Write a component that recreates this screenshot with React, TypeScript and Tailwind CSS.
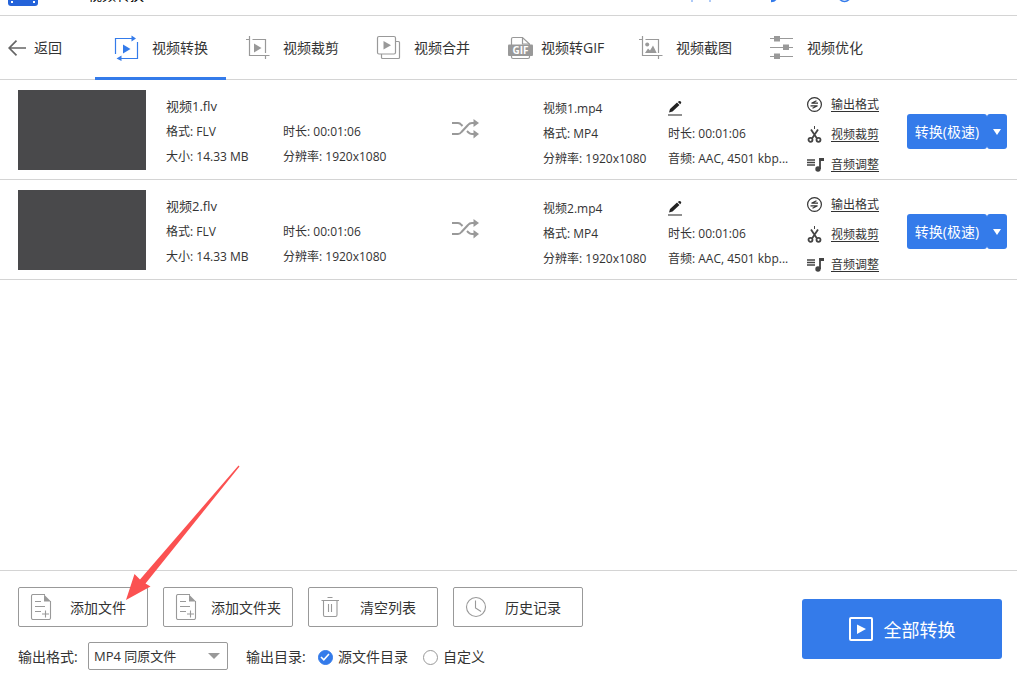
import type { ReactNode } from "react";

const icons: Record<string, ReactNode> = {
  convert: (
    <svg width="26" height="26" viewBox="0 0 26 26" fill="none" stroke="#347bea" strokeWidth="1.2">
      <path d="M1.500 19V3.500H18M23.500 7v16.500H7" />
      <path d="M17.500 .5 22 3.500 17.500 6.500ZM7.500 20.500 2.500 23.500 7.500 26Z" fill="#347bea" stroke="none" />
      <path d="M9 9.500 16.500 14 9 18.500Z" fill="#347bea" stroke="none" />
    </svg>
  ),
  crop: (
    <svg width="26" height="26" viewBox="0 0 26 26" fill="none" stroke="#999" strokeWidth="1.2">
      <path d="M1 4.500h3.500M4.500 1v19.500h20M7.500 4.500h13V18M20.500 20.500V24" />
      <path d="M9 8.500 16.500 13 9 17.500Z" fill="#999" stroke="none" />
    </svg>
  ),
  merge: (
    <svg width="26" height="26" viewBox="0 0 26 26" fill="none" stroke="#999" strokeWidth="1.2">
      <rect x="1.500" y="1.500" width="18" height="17.500" rx="1.500" />
      <path d="M19.500 6.500h3q1 0 1 1v15q0 1-1 1h-16q-1 0-1-1V19" />
      <path d="M7.500 6 15 10.300 7.500 14.600Z" fill="#999" stroke="none" />
    </svg>
  ),
  gif: (
    <svg width="26" height="26" viewBox="0 0 26 26" fill="none" stroke="#999" strokeWidth="1.2">
      <path d="M4.500 10V4q0-1.500 1.500-1.500h9.500L22.500 9v1M15.500 2.500V9h7M4.500 20v2q0 1.500 1.500 1.500h15q1.500 0 1.500-1.500v-2" />
      <rect x="1" y="9.500" width="25" height="11.500" rx="1" fill="#999" stroke="none" />
      <text x="13.500" y="19" textAnchor="middle" fill="#fff" stroke="none" className="font-['Open_Sans'] text-[10px] font-bold">GIF</text>
    </svg>
  ),
  shot: (
    <svg width="26" height="26" viewBox="0 0 26 26" fill="none" stroke="#999" strokeWidth="1.2">
      <path d="M1 4.500h3.500M4.500 1v19.500h20M7.500 4.500h13V18M20.500 20.500V24" />
      <circle cx="9.200" cy="9.500" r="2" fill="#999" stroke="none" />
      <path d="M7 18 10 13.500 12 15.500 15 10.500 18.700 18Z" fill="#999" stroke="none" />
    </svg>
  ),
  tune: (
    <svg width="26" height="26" viewBox="0 0 26 26" stroke="#999" strokeWidth="1.100">
      <path d="M1 3.500h23M1 12.500h23M1 21.500h23" />
      <path d="M5 1h6v5.500H5zM14 9.500h6V15h-6zM5 18.500h6V24H5z" fill="#999" stroke="none" />
    </svg>
  ),
  file: (
    <svg width="24" height="26" viewBox="0 0 24 26" fill="none" stroke="#999" strokeWidth="1.1">
      <path d="M15 .5H3Q1.500 .5 1.500 2v22q0 1.500 1.500 1.500h16q1.500 0 1.500-1.500V7" />
      <path d="M14 .5 21 7.500h-7Z" fill="#999" stroke="none" />
      <path d="M5 7.500h6M5 12.500h10M5 17.500h6M15.500 16.500v7M12 20h7" />
    </svg>
  ),
  trash: (
    <svg width="24" height="26" viewBox="0 0 24 26" fill="none" stroke="#999" strokeWidth="1.1">
      <path d="M7.500 3.500h5M1.500 6.500h17.500M3.500 6.500V21q0 1.500 1.500 1.500h10.500q1.500 0 1.500-1.500V6.500M8.500 10v8M11.500 10v8" />
    </svg>
  ),
  clock: (
    <svg width="24" height="26" viewBox="0 0 24 26" fill="none" stroke="#999" strokeWidth="1.1">
      <circle cx="11" cy="13" r="9.500" />
      <path d="M10.500 6.500V14l5.500 3.500" />
    </svg>
  ),
  format: (
    <svg width="16" height="16" viewBox="0 0 16 16" fill="none" stroke="#333" strokeWidth="1.200">
      <circle cx="7.500" cy="7.500" r="6.900" />
      <path d="M9.500 3.800 4.500 6.200H11M5.500 11.200 10.500 8.800H3.500" />
    </svg>
  ),
  scissors: (
    <svg width="16" height="18" viewBox="0 0 16 18" fill="none" stroke="#444" strokeWidth="1.800">
      <path d="M4 3.500 10 12.500M11 3.500 5 12.500" />
      <circle cx="3.500" cy="13.800" r="2" />
      <circle cx="11.500" cy="13.800" r="2" />
      <path d="M7.500 0v3" strokeWidth="1" />
    </svg>
  ),
  music: (
    <svg width="18" height="16" viewBox="0 0 18 16" fill="none" stroke="#444">
      <path d="M0 3h8M0 5.500h8M0 8h8" strokeWidth="1.400" />
      <path d="M13 12V2h4" strokeWidth="1.800" />
      <path d="M12.500 1h4.500v3h-4.500z" fill="#444" stroke="none" />
      <circle cx="11" cy="12" r="2.700" fill="#444" stroke="none" />
    </svg>
  ),
};

const tabs = [
  { label: "视频转换", icon: "convert", gap: "gap-3" },
  { label: "视频裁剪", icon: "crop", gap: "gap-3" },
  { label: "视频合并", icon: "merge", gap: "gap-3" },
  { label: "视频转GIF", icon: "gif", gap: "gap-2" },
  { label: "视频截图", icon: "shot", gap: "gap-3" },
  { label: "视频优化", icon: "tune", gap: "gap-3" },
];

const links = [
  { label: "输出格式", icon: "format" },
  { label: "视频裁剪", icon: "scissors" },
  { label: "音频调整", icon: "music" },
];

const tools = [
  { label: "添加文件", icon: "file", gap: "gap-4" },
  { label: "添加文件夹", icon: "file", gap: "gap-3" },
  { label: "清空列表", icon: "trash", gap: "gap-4" },
  { label: "历史记录", icon: "clock", gap: "gap-4" },
];

function VideoRow({ name }: { name: string }) {
  return (
    <li className="flex items-start border-b border-[#d4d4d4] pt-[10px] pb-1 text-xs">
      <div className="ml-[18px] h-20 w-32 shrink-0 bg-[#49494b]" />
      <div className="ml-5 grid w-[222px] shrink-0 grid-cols-[117px_1fr] pt-1 leading-[25px] whitespace-nowrap">
        <h2 className="col-span-2 text-[13px]">{name}.flv</h2>
        <p>格式: FLV</p>
        <p>时长: 00:01:06</p>
        <p>大小: 14.33 MB</p>
        <p>分辨率: 1920x1080</p>
      </div>
      <div className="flex h-[78px] flex-1 items-center justify-center">
        <svg width="28" height="20" viewBox="0 0 28 20" fill="none" stroke="#999" strokeWidth="2">
          <path d="M0 4h6q2 0 3.500 2l1 1M0 15h6q2 0 3.500-2L16 6q1.500-2 4-2h3M15 12l1.500 1.500q1.500 1.500 3.500 1.500h3" />
          <path d="M21.500 0 27 4 21.500 8ZM21.500 11 27 15 21.500 19.500Z" fill="#999" stroke="none" />
        </svg>
      </div>
      <div className="grid w-[264px] shrink-0 grid-cols-[125px_1fr] pt-[6px] leading-[25px] whitespace-nowrap">
        <h2>{name}.mp4</h2>
        <button type="button" aria-label="重命名" className="self-center justify-self-start">
          <svg width="14" height="16" viewBox="0 0 14 16" fill="#222">
            <path d="M1 11.500 2 8 9 1.500 11.500 4 4.500 10.500ZM9.800 .9 10.800 .2Q12 -.2 12.800 .6 13.600 1.500 13 2.300L12.200 3.200ZM0 13.500h14v1H0z" />
          </svg>
        </button>
        <p>格式: MP4</p>
        <p>时长: 00:01:06</p>
        <p>分辨率: 1920x1080</p>
        <p>音频: AAC, 4501 kbp...</p>
      </div>
      <div className="flex w-[100px] shrink-0 flex-col gap-[10px] pt-[5px] leading-5">
        {links.map((l) => (
          <a key={l.label} href="#" className="flex h-5 items-center underline underline-offset-2">
            <span className="flex w-6">{icons[l.icon]}</span>
            {l.label}
          </a>
        ))}
      </div>
      <div className="mt-6 mr-[10px] flex h-[35px] w-[100px] shrink-0 text-sm text-white">
        <button type="button" className="flex-1 rounded-[3px] bg-[#347bea] whitespace-nowrap">转换(极速)</button>
        <button type="button" aria-label="更多转换选项" className="flex w-5 items-center justify-center rounded-[3px] bg-[#347bea]">
          <svg width="8" height="6" viewBox="0 0 8 6" fill="#fff"><path d="M0 0h8L4 6Z" /></svg>
        </button>
      </div>
    </li>
  );
}

function DirOption({ label, checked }: { label: string; checked?: boolean }) {
  return (
    <label className="flex items-center gap-[5px]">
      <span className="grid size-4 place-items-center">
        <input
          type="radio"
          name="dir"
          defaultChecked={checked}
          className="peer col-start-1 row-start-1 size-[15px] appearance-none rounded-full border border-[#999] bg-white checked:border-[#347bea] checked:bg-[#347bea]"
        />
        <svg width="10" height="8" viewBox="0 0 10 8" fill="none" stroke="#fff" strokeWidth="1.600" className="pointer-events-none col-start-1 row-start-1 opacity-0 peer-checked:opacity-100">
          <path d="M1 4 3.800 6.800 9 1" />
        </svg>
      </span>
      {label}
    </label>
  );
}

export default function App() {
  return (
    <div lang="zh-CN" className="flex min-h-screen flex-col bg-white font-['Open_Sans','Noto_Sans_CJK_SC',sans-serif] text-sm text-[#333]">
      <header className="flex h-4 items-end justify-between overflow-hidden border-b border-[#d4d4d4] pb-[9px] pl-2">
        <div className="flex items-end gap-[50px]">
          <svg width="30" height="30" viewBox="0 0 30 30">
            <rect width="30" height="30" rx="3" fill="#2563d9" />
            <path d="M3 25h2v2H3zM25 25h2v2h-2z" fill="#fff" />
          </svg>
          <span className="mb-px leading-5 text-black">视频转换</span>
        </div>
        <svg width="170" height="12" viewBox="0 0 170 12" fill="none" stroke="#347bea" className="mr-[157px]">
          <path d="M2 4v4M20 4v4" strokeWidth="2" opacity=".4" />
          <path d="M86 4q-1 3-5 3" strokeWidth="2.500" />
          <circle cx="154.500" cy="1.500" r="6" strokeWidth="1.500" />
        </svg>
      </header>

      <nav className="flex h-16 border-b border-[#d4d4d4]">
        <button type="button" className="flex w-[95px] items-center gap-2 pt-px pl-2">
          <svg width="18" height="16" viewBox="0 0 18 16" fill="none" stroke="#666" strokeWidth="1.700">
            <path d="M8.500 .7 1.200 8l7.300 7.300M1.200 8H18" />
          </svg>
          返回
        </button>
        {tabs.map((t, i) => (
          <button
            key={t.label}
            type="button"
            aria-current={i === 0 ? "page" : undefined}
            className={`-mb-px flex w-[131px] items-center border-b-[3px] pt-[2px] pl-[19px] whitespace-nowrap ${t.gap} ${i === 0 ? "border-[#347bea]" : "border-transparent"}`}
          >
            {icons[t.icon]}
            {t.label}
          </button>
        ))}
      </nav>

      <main className="flex-1">
        <ul>
          <VideoRow name="视频1" />
          <VideoRow name="视频2" />
        </ul>
      </main>

      <footer className="relative flex items-start justify-between border-t border-[#d4d4d4] pt-4 pr-[15px] pb-[11px] pl-[18px]">
        <div className="flex flex-col gap-[15px]">
          <div className="flex gap-[15px]">
            {tools.map((t) => (
              <button key={t.label} type="button" className={`flex h-10 w-[130px] items-center rounded-[2px] border border-[#999] pl-[11px] whitespace-nowrap ${t.gap}`}>
                {icons[t.icon]}
                <span className="pt-[2px]">{t.label}</span>
              </button>
            ))}
          </div>
          <div className="flex items-center whitespace-nowrap">
            <label htmlFor="format" className="w-[70px] pt-[2px]">输出格式:</label>
            <div className="grid items-center">
              <select id="format" className="col-start-1 row-start-1 h-7 w-[140px] appearance-none rounded-[2px] border border-[#999] bg-white pl-[5px] text-[13px]">
                <option>MP4 同原文件</option>
              </select>
              <svg width="12" height="6" viewBox="0 0 12 6" fill="#999" className="pointer-events-none col-start-1 row-start-1 mr-2 justify-self-end">
                <path d="M0 0h12L6 6Z" />
              </svg>
            </div>
            <fieldset className="ml-[18px] flex items-center pt-[2px]">
              <span className="w-[71px]">输出目录:</span>
              <div className="flex gap-[14px]">
                <DirOption label="源文件目录" checked />
                <DirOption label="自定义" />
              </div>
            </fieldset>
          </div>
        </div>
        <button type="button" className="mt-3 flex h-[60px] w-[200px] items-center justify-center gap-[11px] rounded-[3px] bg-[#347bea] text-lg text-white">
          <svg width="24" height="24" viewBox="0 0 24 24" fill="none" stroke="#fff" strokeWidth="2">
            <rect x="1" y="1" width="22" height="22" rx="1" />
            <path d="M8 7.500 17 12 8 17Z" fill="#fff" stroke="none" />
          </svg>
          <span className="pt-[2px]">全部转换</span>
        </button>
        <svg width="114" height="136" viewBox="0 0 114 136" fill="#fb5151" className="pointer-events-none absolute -top-[106px] left-[126px]">
          <path d="M0 135 8.500 109 14 114.500 112.500 .5 113.500 1.500 19.500 118.500 24.500 121.500Z" />
        </svg>
      </footer>
    </div>
  );
}
